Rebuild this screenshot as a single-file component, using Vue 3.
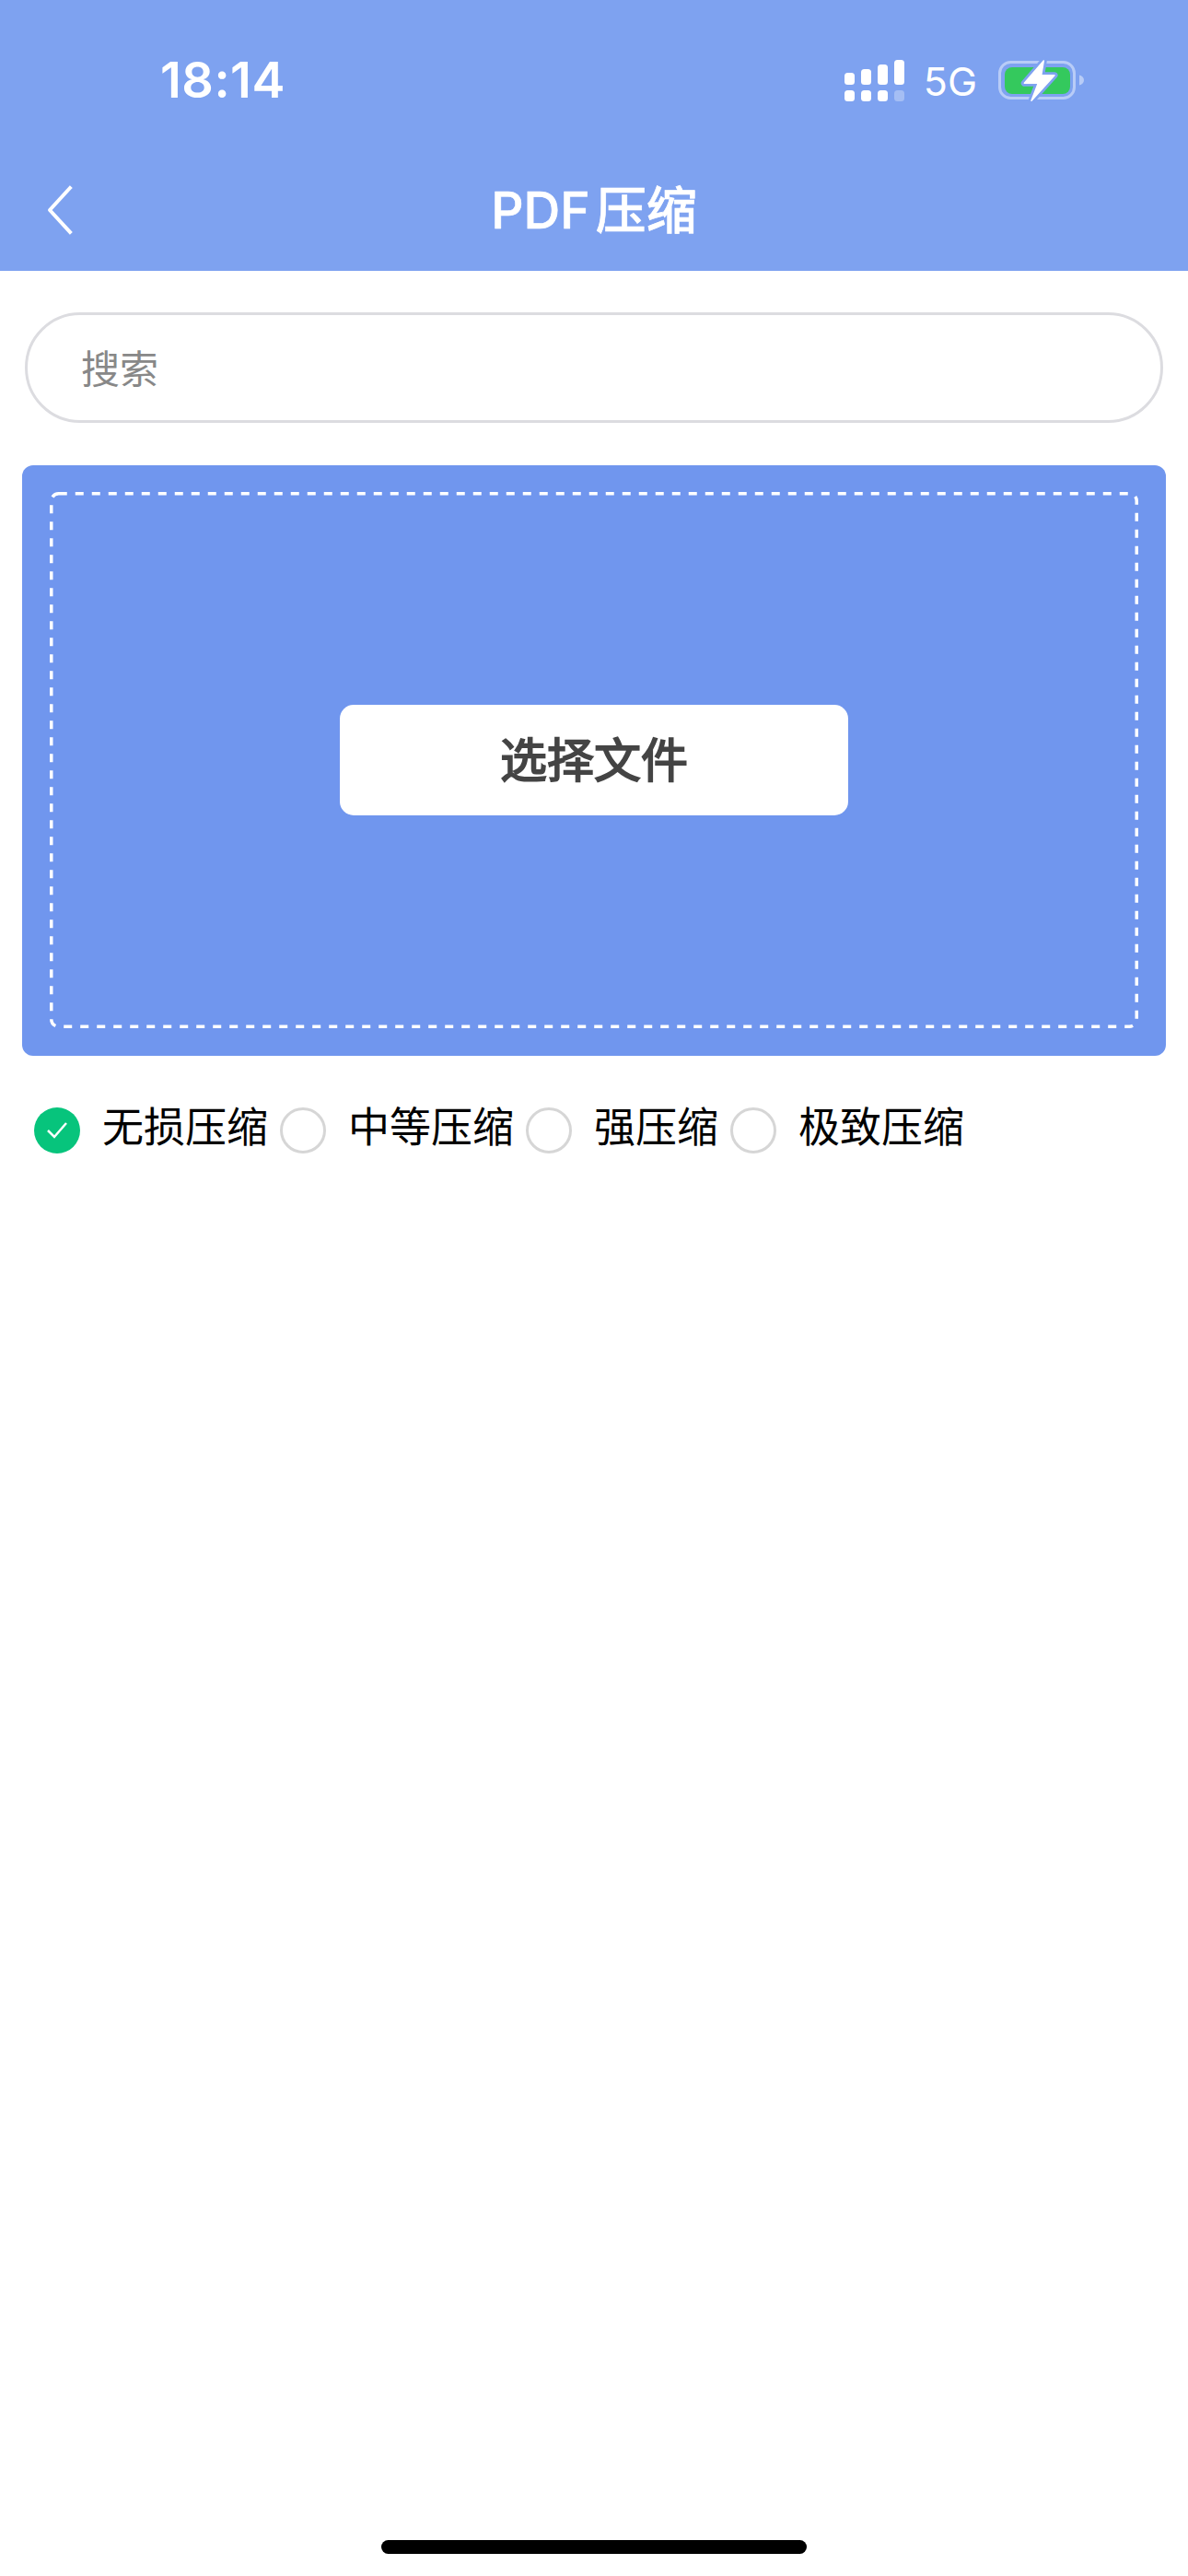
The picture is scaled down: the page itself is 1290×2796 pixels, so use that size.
<script setup>
const options = [
  { label: '无损压缩', checked: true },
  { label: '中等压缩', checked: false },
  { label: '强压缩', checked: false },
  { label: '极致压缩', checked: false },
]
</script>

<template>
  <div class="page">
    <header class="header">
      <div class="status">
        <span class="time">18:14</span>
        <div class="status-right">
          <svg class="signal" width="65" height="45" viewBox="0 0 65 45">
            <rect x="0" y="14" width="11" height="13" rx="3.5" fill="#fff" />
            <rect x="18" y="10" width="11" height="17" rx="3.5" fill="#fff" />
            <rect x="36" y="5" width="11" height="22" rx="3.5" fill="#fff" />
            <rect x="54" y="0" width="11" height="27" rx="3.5" fill="#fff" />
            <rect x="0" y="33" width="11" height="12" rx="3.5" fill="#fff" />
            <rect x="18" y="33" width="11" height="12" rx="3.5" fill="#fff" />
            <rect x="36" y="33" width="11" height="12" rx="3.5" fill="#fff" />
            <rect x="54" y="33" width="11" height="12" rx="3.5" fill="#fff" opacity="0.3" />
          </svg>
          <span class="net">5G</span>
          <svg class="battery" width="94" height="46" viewBox="0 0 94 46">
            <rect x="1.5" y="3.5" width="81" height="39" rx="12" fill="none" stroke="#fff" stroke-opacity="0.45" stroke-width="3" />
            <path d="M88 17.5c3 .6 5 2.8 5 5.5s-2 4.900-5 5.500z" fill="#fff" fill-opacity="0.45" />
            <rect x="7" y="9" width="71" height="29" rx="8" fill="#34c95d" />
            <path d="M49.300 2L28.300 26.300H43.300L36 45.300L61 17.700H46.700z" fill="#fff" stroke="#7ea2f0" stroke-width="7" stroke-linejoin="round" paint-order="stroke" />
            <path d="M49.300 2L28.300 26.300H43.300L36 45.300L61 17.700H46.700z" fill="#fff" stroke="#fff" stroke-width="1.500" stroke-linejoin="round" />
          </svg>
        </div>
      </div>
      <div class="nav">
        <svg class="back" width="30" height="54" viewBox="0 0 30 54">
          <path d="M26 3L4 27l22 24" fill="none" stroke="#fff" stroke-width="4" stroke-linecap="square" stroke-linejoin="round" />
        </svg>
        <span class="title"><span class="latin">PDF</span>压缩</span>
      </div>
    </header>

    <main class="content">
      <div class="search">搜索</div>

      <section class="drop">
        <svg class="dash" width="1182" height="582" viewBox="0 0 1182 582">
          <rect x="1.750" y="1.750" width="1178.500" height="578.500" rx="8" fill="none" stroke="#fff" stroke-width="3.500" stroke-dasharray="9 9" />
        </svg>
        <button class="pick" type="button">选择文件</button>
      </section>

      <div class="options">
        <label v-for="opt in options" :key="opt.label" class="option">
          <span class="radio" :class="{ checked: opt.checked }">
            <svg v-if="opt.checked" width="24" height="20" viewBox="0 0 24 20">
              <path d="M2 10l7 7L22 2" fill="none" stroke="#fff" stroke-width="2.500" />
            </svg>
          </span>
          <span class="label">{{ opt.label }}</span>
        </label>
      </div>
    </main>

    <div class="home"></div>
  </div>
</template>

<style scoped>
.page {
  position: relative;
  display: flex;
  flex-direction: column;
  width: 1290px;
  min-height: 2796px;
  background: #fff;
  font-family: Inter, "Noto Sans CJK SC", "Liberation Sans", sans-serif;
}

.header {
  height: 294px;
  background: #7ea2f0;
  color: #fff;
}

.status {
  display: flex;
  align-items: center;
  justify-content: space-between;
  height: 174px;
  padding: 0 112px 0 174px;
  box-sizing: border-box;
}

.time {
  font-size: 54px;
  font-weight: 600;
  line-height: 1;
  letter-spacing: 0.5px;
}

.status-right {
  display: flex;
  align-items: center;
}

.signal {
  margin-right: 21px;
}

.net {
  font-size: 43px;
  line-height: 1;
  margin-top: 2px;
  margin-right: 23px;
}

.battery {
  overflow: visible;
}

.nav {
  position: relative;
  display: flex;
  justify-content: center;
  align-items: center;
  height: 100px;
  margin-top: 4px;
}

.back {
  position: absolute;
  left: 50px;
  top: 23px;
}

.title {
  font-size: 55px;
  font-weight: 500;
  line-height: 1;
  -webkit-text-stroke: 0.6px #fff;
}

.latin {
  margin-right: 6px;
}

.content {
  display: flex;
  flex-direction: column;
  padding: 45px 24px 0;
}

.search {
  height: 120px;
  margin: 0 3px;
  padding-left: 58px;
  box-sizing: border-box;
  border: 3px solid #dcdce0;
  border-radius: 60px;
  color: #888;
  font-size: 42px;
  line-height: 118px;
}

.drop {
  position: relative;
  display: flex;
  align-items: flex-start;
  justify-content: center;
  height: 641px;
  margin-top: 46px;
  padding-top: 260px;
  box-sizing: border-box;
  border-radius: 12px;
  background: #7096ee;
}

.dash {
  position: absolute;
  left: 30px;
  top: 29px;
}

.pick {
  width: 552px;
  height: 120px;
  padding: 0 0 6px;
  border: 0;
  border-radius: 15px;
  background: #fff;
  color: #444;
  font-family: inherit;
  font-size: 51px;
  font-weight: 400;
  -webkit-text-stroke: 1.8px #444;
}

.options {
  display: flex;
  gap: 13px;
  margin-top: 56px;
  padding-left: 13px;
}

.option {
  display: flex;
  align-items: center;
  gap: 24px;
  height: 50px;
}

.radio {
  display: flex;
  align-items: center;
  justify-content: center;
  width: 50px;
  height: 50px;
  box-sizing: border-box;
  border: 3px solid #d6d6d6;
  border-radius: 50%;
}

.radio.checked {
  border: 0;
  background: #07c47c;
}

.label {
  margin-bottom: 7px;
  color: #000;
  font-size: 45px;
  line-height: 43px;
}

.home {
  width: 462px;
  height: 15px;
  margin: auto auto 24px;
  border-radius: 8px;
  background: #000;
}
</style>

<style>
html, body {
  background: #fff;
}
</style>
